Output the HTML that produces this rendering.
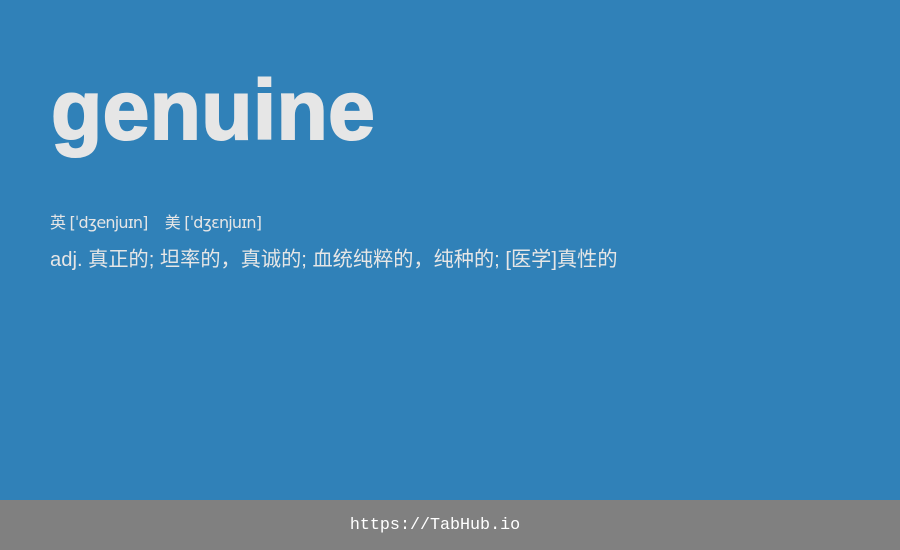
<!DOCTYPE html>
<html><head><meta charset="utf-8"><style>
html,body{margin:0;padding:0;width:900px;height:550px;overflow:hidden;background:#3081b8;}
.t{position:absolute;left:51px;top:68px;font:bold 84px/1 "Liberation Sans",Arial,sans-serif;color:#e6e6e6;-webkit-text-stroke:2px #e6e6e6;letter-spacing:0.3px;}
.p{position:absolute;left:50px;top:212px;font:16px/22px "DejaVu Sans","Noto Sans CJK SC",sans-serif;color:#e6e6e6;white-space:pre;letter-spacing:-0.8px;}
.d{position:absolute;left:50px;top:246px;font:20.2px/28px "Liberation Sans","Noto Sans CJK SC",sans-serif;color:#e6e6e6;white-space:pre;}
.f{position:absolute;left:0;bottom:0;width:900px;height:50px;box-sizing:border-box;padding:2px 30px 0 0;background:#808080;color:#fff;font:16.7px/48px "Liberation Mono",monospace;text-align:center;overflow:hidden;}
</style></head><body>
<div class="t">genuine</div>
<div class="p">英 [ˈdʒenjuɪn]    美 [ˈdʒɛnjuɪn]</div>
<div class="d">adj. 真正的; 坦率的，真诚的; 血统纯粹的，纯种的; [医学]真性的</div>
<div class="f">https://TabHub.io</div>
</body></html>
